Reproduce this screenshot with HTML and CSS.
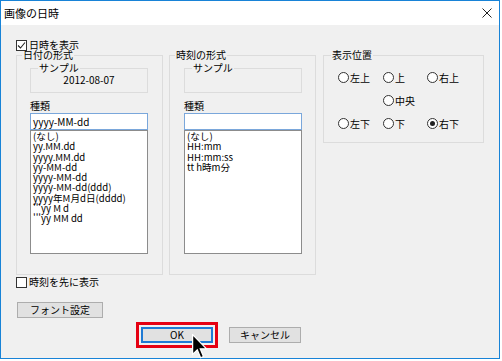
FILE: index.html
```html
<!DOCTYPE html>
<html lang="ja">
<head>
<meta charset="utf-8">
<title>画像の日時</title>
<link rel="stylesheet" href="styles.css">
</head>
<body>
<div class="window">
  <div class="titlebar">
    <span class="title">画像の日時</span>
    <svg class="close" viewBox="0 0 10 10"><path d="M0.5 0.5 L9.5 9.5 M9.5 0.5 L0.5 9.5" stroke="#222" stroke-width="1" fill="none"/></svg>
  </div>
  <div class="client">
    <div class="check">
      <span class="box"><svg viewBox="0 0 9 9" class="tick"><path d="M1 4.5 L3.5 7 L8 1.5" stroke="#222" stroke-width="1.1" fill="none"/></svg></span>
      <span>日時を表示</span>
    </div>
    <div class="groups">
      <fieldset class="group group-date">
        <legend>日付の形式</legend>
        <div class="gbody gbody-a">
          <fieldset class="sample">
            <legend>サンプル</legend>
            <div class="sample-val">2012-08-07</div>
          </fieldset>
          <div class="kind">種類</div>
          <div class="input">yyyy-MM-dd</div>
          <ul class="list">
            <li>(なし)</li>
            <li>yy.MM.dd</li>
            <li>yyyy.MM.dd</li>
            <li>yy-MM-dd</li>
            <li>yyyy-MM-dd</li>
            <li>yyyy-MM-dd(ddd)</li>
            <li>yyyy年M月d日(dddd)</li>
            <li>'''yy M d</li>
            <li>'''yy MM dd</li>
          </ul>
        </div>
      </fieldset>
      <fieldset class="group group-time">
        <legend>時刻の形式</legend>
        <div class="gbody gbody-b">
          <fieldset class="sample">
            <legend>サンプル</legend>
            <div class="sample-val"></div>
          </fieldset>
          <div class="kind">種類</div>
          <div class="input"></div>
          <ul class="list">
            <li>(なし)</li>
            <li>HH:mm</li>
            <li>HH:mm:ss</li>
            <li>tt h時m分</li>
          </ul>
        </div>
      </fieldset>
      <fieldset class="group group-pos">
        <legend>表示位置</legend>
        <div class="radios">
          <div class="radio"><span class="dot"></span>左上</div>
          <div class="radio"><span class="dot"></span>上</div>
          <div class="radio"><span class="dot"></span>右上</div>
          <div class="radio-empty"></div>
          <div class="radio"><span class="dot"></span>中央</div>
          <div class="radio-empty"></div>
          <div class="radio"><span class="dot"></span>左下</div>
          <div class="radio"><span class="dot"></span>下</div>
          <div class="radio"><span class="dot on"></span>右下</div>
        </div>
      </fieldset>
    </div>
    <div class="check check-2">
      <span class="box"></span>
      <span>時刻を先に表示</span>
    </div>
    <button class="btn btn-font">フォント設定</button>
    <div class="actions">
      <button class="btn btn-ok">OK</button>
      <button class="btn btn-cancel">キャンセル</button>
    </div>
  </div>
</div>
<svg class="cursor" viewBox="0 0 13 21"><path d="M0.5 0.5 L0.5 16.5 L4.3 12.8 L7 19.2 L9.3 18.2 L6.7 12 L11.8 12 Z" fill="#000" stroke="#fff" stroke-width="1" stroke-linejoin="miter"/></svg>
</body>
</html>
```

FILE: styles.css
```css
* { box-sizing: border-box; }
html, body { margin: 0; padding: 0; background: #fff; }
body {
  font-family: "Noto Sans CJK JP", "Noto Sans", sans-serif;
  font-size: 10px;
  color: #000;
  width: 502px;
  height: 361px;
  overflow: hidden;
  position: relative;
}
.window {
  width: 500px;
  height: 359px;
  border: 1px solid #1883d7;
  display: flex;
  flex-direction: column;
  background: #f0f0f0;
}
.titlebar {
  height: 24px;
  flex: none;
  background: #fff;
  display: flex;
  align-items: center;
  justify-content: space-between;
  padding: 0 7px 0 3px;
}
.title { font-size: 11px; line-height: 12px; }
.close { width: 10px; height: 10px; display: block; }
.client {
  flex: 1;
  padding: 14px 15px 0;
  display: flex;
  flex-direction: column;
  align-items: flex-start;
}
.check {
  display: flex;
  align-items: center;
  gap: 2px;
  height: 12px;
  line-height: 12px;
  white-space: nowrap;
}
.box {
  width: 11px;
  height: 11px;
  border: 1px solid #333;
  background: #fff;
  display: flex;
  align-items: center;
  justify-content: center;
}
.tick { width: 9px; height: 9px; display: block; }
.check-2 { margin-top: 1px; }
.groups {
  display: flex;
  align-items: flex-start;
  margin-top: -2px;
}
fieldset {
  margin: 0;
  min-width: 0;
  border: 1px solid #dcdcdc;
}
legend {
  padding: 0 1px;
  line-height: 12px;
  height: 12px;
}
.group { width: 147px; padding: 0 5px 20px; }
.group-time { margin-left: 6px; }
.group-pos { margin-left: 7px; width: 161px; padding: 0 7px 7px; }
.gbody-a { padding: 0 9px 0 8px; }
.gbody-b { padding: 0 8px 0 9px; }
.sample {
  margin-top: 1px;
  padding: 0 7px 6px;
}
.sample-val {
  height: 12px;
  line-height: 12px;
  text-align: center;
}
.kind { margin-top: 7px; line-height: 12px; height: 12px; }
.input {
  margin-top: 1px;
  height: 17px;
  border: 1px solid #7aa7db;
  background: #fff;
  padding: 0 2px;
  line-height: 15px;
}
.list {
  list-style: none;
  margin: 0;
  height: 124px;
  border: 1px solid #8c8c8c;
  background: #fff;
  padding: 0 2px;
  font-size: 9.6px;
  line-height: 10.3px;
  white-space: nowrap;
}
.radios {
  margin: 5px 0 0 7px;
  display: grid;
  grid-template-columns: 45px 44px auto;
  grid-auto-rows: 23px;
}
.radio {
  display: flex;
  align-items: center;
  gap: 1px;
  white-space: nowrap;
}
.dot {
  width: 11px;
  height: 11px;
  border: 1px solid #333;
  border-radius: 50%;
  background: #fff;
  display: flex;
  align-items: center;
  justify-content: center;
}
.dot.on::after {
  content: "";
  width: 5px;
  height: 5px;
  border-radius: 50%;
  background: #222;
}
.btn {
  font: inherit;
  font-size: 10px;
  line-height: 12px;
  height: 16px;
  width: 72px;
  padding: 0;
  margin: 0;
  background: #e1e1e1;
  border: 1px solid #adadad;
  color: #000;
}
.btn-font { margin: 14px 0 0 1px; width: 86px; }
.actions {
  display: flex;
  gap: 16px;
  margin: 9px 0 0 125px;
}
.btn-ok {
  border: 2px solid #1f7ad4;
  outline: 3px solid #e50012;
  outline-offset: 2px;
}
.cursor {
  position: absolute;
  left: 192px;
  top: 334px;
  width: 16px;
  height: 26px;
}
```
